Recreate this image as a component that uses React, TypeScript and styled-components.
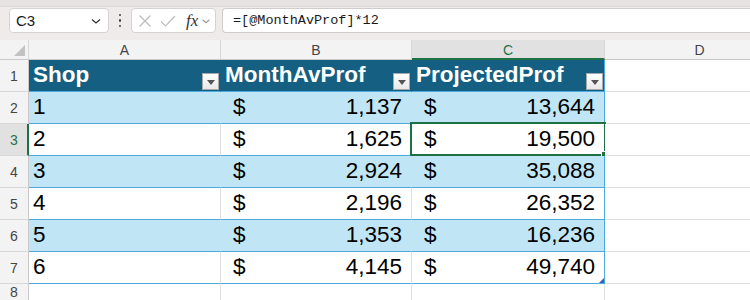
import React from "react";
import styled, { createGlobalStyle } from "styled-components";

type Tone = "head" | "band" | "plain" | "empty";

const ROWS: [number, number, number][] = [
  [1, 1137, 13644],
  [2, 1625, 19500],
  [3, 2924, 35088],
  [4, 2196, 26352],
  [5, 1353, 16236],
  [6, 4145, 49740],
];

const COLUMNS = ["A", "B", "C", "D"];
const HEADERS = ["Shop", "MonthAvProf", "ProjectedProf"];

const fmt = (n: number) => n.toLocaleString("en-US");

const GlobalStyle = createGlobalStyle`
  html, body {
    margin: 0;
    padding: 0;
    background: #ffffff;
    overflow: hidden;
  }
  body {
    font-family: "Liberation Sans", Arial, sans-serif;
  }
`;

const App: React.FC = () => {
  return (
    <>
      <GlobalStyle />
      <Page>
        <TopStrip />
        <FormulaRow>
          <NameBox>
            <span>C3</span>
            <Chevron width="12" height="12" viewBox="0 0 12 12">
              <path d="M2 4.5 L6 8 L10 4.5" />
            </Chevron>
          </NameBox>
          <Dots>
            <i />
            <i />
            <i />
          </Dots>
          <FxBox>
            <svg width="14" height="14" viewBox="0 0 14 14">
              <path d="M1.5 1.5 L12.5 12.5 M12.5 1.5 L1.5 12.5" stroke="#bcbcbc" strokeWidth="1.2" fill="none" />
            </svg>
            <svg width="16" height="14" viewBox="0 0 16 14">
              <path d="M1 7.5 L5.5 12 L15 2" stroke="#bcbcbc" strokeWidth="1.2" fill="none" />
            </svg>
            <FxText>fx</FxText>
            <Chevron width="10" height="10" viewBox="0 0 12 12" $light>
              <path d="M2 4.5 L6 8 L10 4.5" />
            </Chevron>
          </FxBox>
          <FormulaInput>=[@MonthAvProf]*12</FormulaInput>
        </FormulaRow>

        <Sheet>
          <Corner>
            <svg width="11" height="11" viewBox="0 0 11 11">
              <polygon points="11,0 11,11 0,11" fill="#c2c2c2" />
            </svg>
          </Corner>
          {COLUMNS.map((c) => (
            <ColHeader key={c} $selected={c === "C"}>
              {c}
            </ColHeader>
          ))}

          <RowHeader $selected={false}>1</RowHeader>
          {HEADERS.map((h, i) => (
            <Cell key={h} $tone="head" $edge={i === 2}>
              <HeadTitle>{h}</HeadTitle>
              <FilterButton>
                <svg width="8" height="5" viewBox="0 0 8 5">
                  <polygon points="0,0 8,0 4,5" fill="#555" />
                </svg>
              </FilterButton>
            </Cell>
          ))}
          <Cell $tone="empty" $edge={false} />

          {ROWS.map(([shop, month, proj], idx) => {
            const tone: Tone = idx % 2 === 0 ? "band" : "plain";
            const rowNo = idx + 2;
            const isSel = rowNo === 3;
            const isLast = idx === ROWS.length - 1;
            return (
              <React.Fragment key={shop}>
                <RowHeader $selected={isSel}>{rowNo}</RowHeader>
                <Cell $tone={tone} $edge={false}>
                  <Value>{shop}</Value>
                </Cell>
                <Cell $tone={tone} $edge={false} $money>
                  <Value>$</Value>
                  <Value>{fmt(month)}</Value>
                </Cell>
                <Cell $tone={tone} $edge $money>
                  <Value>$</Value>
                  <Value>{fmt(proj)}</Value>
                  {isSel && (
                    <Selection>
                      <FillHandle />
                    </Selection>
                  )}
                  {isLast && <ResizeHandle />}
                </Cell>
                <Cell $tone="empty" $edge={false} />
              </React.Fragment>
            );
          })}

          <RowHeader $selected={false} $partial>8</RowHeader>
          <Cell $tone="empty" $edge={false} />
          <Cell $tone="empty" $edge={false} />
          <Cell $tone="empty" $edge={false} />
          <Cell $tone="empty" $edge={false} />
        </Sheet>
      </Page>
    </>
  );
};

export default App;

const Page = styled.div`
  width: 750px;
  height: 300px;
  overflow: hidden;
  background: #efebeb;
  display: flex;
  flex-direction: column;

  > * {
    flex-shrink: 0;
  }
`;

const TopStrip = styled.div`
  height: 6px;
  background: #e7e3e3;
  border-bottom: 1px solid #dcd8d8;
`;

const FormulaRow = styled.div`
  height: 33px;
  display: flex;
  align-items: flex-start;
  padding: 1px 0 0 9px;
  box-sizing: border-box;
`;

const NameBox = styled.div`
  width: 100px;
  height: 25px;
  box-sizing: border-box;
  background: #ffffff;
  border: 1px solid #d6d2d2;
  border-radius: 4px;
  display: flex;
  align-items: center;
  justify-content: space-between;
  padding: 0 6px 0 6px;
  font-size: 15px;
  color: #1a1a1a;
`;

const Chevron = styled.svg<{ $light?: boolean }>`
  path {
    fill: none;
    stroke: ${(p) => (p.$light ? "#9a9a9a" : "#333333")};
    stroke-width: 1.3;
  }
`;

const Dots = styled.div`
  width: 22px;
  height: 25px;
  display: flex;
  flex-direction: column;
  align-items: center;
  justify-content: center;
  gap: 3px;

  i {
    width: 2.5px;
    height: 2.5px;
    border-radius: 50%;
    background: #444;
  }
`;

const FxBox = styled.div`
  width: 85px;
  height: 25px;
  box-sizing: border-box;
  background: #ffffff;
  border: 1px solid #d6d2d2;
  border-radius: 4px;
  display: flex;
  align-items: center;
  gap: 8px;
  padding: 0 3px 0 6px;
`;

const FxText = styled.span`
  font-family: "Liberation Serif", "Times New Roman", serif;
  font-style: italic;
  font-size: 17px;
  color: #333;
  margin-left: 2px;
  margin-right: -5px;
  line-height: 1;
`;

const FormulaInput = styled.div`
  flex: 1;
  margin-left: 6px;
  height: 25px;
  box-sizing: border-box;
  background: #ffffff;
  border: 1px solid #d0cccc;
  border-right: none;
  border-radius: 4px 0 0 4px;
  display: flex;
  align-items: center;
  padding-left: 10px;
  font-family: "Liberation Mono", "Courier New", monospace;
  font-size: 13.5px;
  color: #1a1a1a;
`;

const Sheet = styled.div`
  display: grid;
  grid-template-columns: 29px 192px 191px 193px 190px;
  grid-template-rows: 20px repeat(8, 32px);
  background: #ffffff;
`;

const Corner = styled.div`
  background: #f3f3f3;
  border-right: 1px solid #d8d8d8;
  border-bottom: 1px solid #c9c9c9;
  display: flex;
  align-items: flex-end;
  justify-content: flex-end;
  padding: 0 3px 3px 0;
  box-sizing: border-box;
`;

const ColHeader = styled.div<{ $selected: boolean }>`
  box-sizing: border-box;
  background: ${(p) => (p.$selected ? "#e1e1e1" : "#f3f3f3")};
  border-right: 1px solid #d8d8d8;
  border-bottom: ${(p) => (p.$selected ? "2px solid #1e7145" : "1px solid #c9c9c9")};
  color: ${(p) => (p.$selected ? "#1e7145" : "#444444")};
  font-family: "Liberation Sans", Arial, sans-serif;
  font-size: 14px;
  display: flex;
  align-items: center;
  justify-content: center;
  padding-top: ${(p) => (p.$selected ? "1px" : "0")};
`;

const RowHeader = styled.div<{ $selected: boolean; $partial?: boolean }>`
  box-sizing: border-box;
  background: ${(p) => (p.$selected ? "#e1e1e1" : "#f3f3f3")};
  border-bottom: 1px solid #d8d8d8;
  border-right: ${(p) => (p.$selected ? "2px solid #1e7145" : "1px solid #c9c9c9")};
  color: ${(p) => (p.$selected ? "#1e7145" : "#444444")};
  font-size: 14px;
  line-height: 16px;
  display: flex;
  align-items: ${(p) => (p.$partial ? "flex-start" : "flex-end")};
  justify-content: center;
  padding: ${(p) => (p.$partial ? "0" : "0 0 7px")};
  padding-left: ${(p) => (p.$selected ? "1px" : "0")};
`;

const toneBg: Record<Tone, string> = {
  head: "#156082",
  band: "#c0e6f5",
  plain: "#ffffff",
  empty: "#ffffff",
};

const TABLE_LINE = "#4ea9dc";

const Cell = styled.div<{ $tone: Tone; $edge: boolean; $money?: boolean }>`
  position: relative;
  box-sizing: border-box;
  background: ${(p) => toneBg[p.$tone]};
  border-bottom: 1px solid ${(p) => (p.$tone === "empty" ? "#e1e1e1" : TABLE_LINE)};
  border-right: 1px solid
    ${(p) =>
      p.$edge
        ? TABLE_LINE
        : p.$tone === "head"
        ? "#156082"
        : p.$tone === "band"
        ? "#c0e6f5"
        : "#e1e1e1"};
  display: flex;
  align-items: flex-end;
  justify-content: space-between;
  padding: ${(p) =>
    p.$tone === "head" ? "0 1px 1px 4px" : p.$money ? "0 9px 3px 12px" : "0 4px 3px 4px"};
  color: ${(p) => (p.$tone === "head" ? "#ffffff" : "#000000")};
  font-family: "Liberation Sans", Arial, sans-serif;
  font-size: 22.5px;
`;

const Value = styled.span`
  line-height: 26px;
`;

const HeadTitle = styled.span`
  font-weight: bold;
  line-height: 26px;
  padding-bottom: 2px;
`;

const FilterButton = styled.span`
  width: 17px;
  height: 17px;
  box-sizing: border-box;
  border: 1px solid #a8a8a8;
  background: linear-gradient(#ffffff, #e9e9e9);
  display: flex;
  align-items: center;
  justify-content: center;
  padding-top: 2px;
`;

const Selection = styled.span`
  position: absolute;
  left: -2px;
  top: -2px;
  right: -2px;
  bottom: -1px;
  border: 2px solid #1e7145;
  pointer-events: none;
`;

const FillHandle = styled.span`
  position: absolute;
  right: -4px;
  bottom: -4px;
  width: 5px;
  height: 5px;
  background: #1e7145;
  border: 1px solid #ffffff;
`;

const ResizeHandle = styled.span`
  position: absolute;
  right: 0;
  bottom: 0;
  width: 0;
  height: 0;
  border-left: 5px solid transparent;
  border-bottom: 5px solid #3b5bb5;
`;
